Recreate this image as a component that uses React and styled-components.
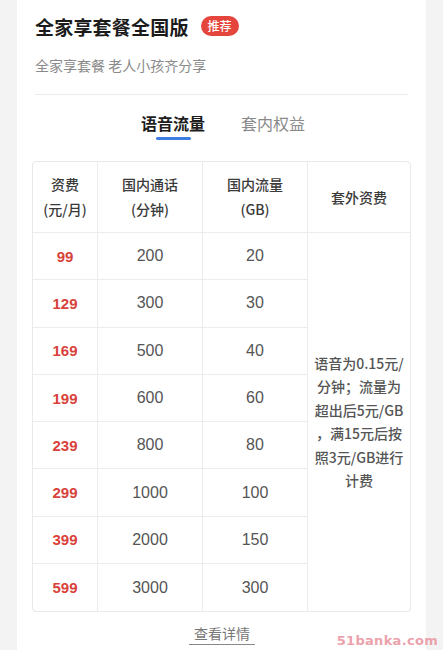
import styled, { createGlobalStyle } from 'styled-components';

const GlobalStyle = createGlobalStyle`
  html, body {
    margin: 0;
    padding: 0;
    background: #f3f3f3;
    font-family: "Noto Sans CJK SC", "Noto Sans", sans-serif;
  }
`;

const Page = styled.div`
  position: relative;
  width: 443px;
  height: 650px;
  overflow: hidden;
  background: #f3f3f3;
`;

const Card = styled.div`
  margin: 0 17px;
  height: 650px;
  background: #fff;
  padding: 0 15px 0 18px;
  box-sizing: border-box;
  display: flex;
  flex-direction: column;
`;

const TitleRow = styled.div`
  display: flex;
  align-items: center;
  gap: 12px;
  margin-top: 12px;
  height: 28px;
`;

const Title = styled.h1`
  margin: 0;
  font-size: 19px;
  font-weight: 700;
  color: #1b1b1b;
  letter-spacing: 0.2px;
`;

const Badge = styled.span`
  background: #e4463d;
  color: #fff;
  font-size: 12px;
  line-height: 20px;
  padding: 0 7px;
  border-radius: 10px;
  font-weight: 500;
`;

const Subtitle = styled.div`
  margin-top: 15px;
  font-size: 14px;
  color: #8a8a8a;
  line-height: 20px;
`;

const Divider = styled.div`
  height: 1px;
  background: #ececec;
  margin-top: 19px;
  margin-right: 3px;
`;

const Tabs = styled.div`
  display: flex;
  justify-content: center;
  gap: 36px;
  margin-top: 17px;
`;

const Tab = styled.div`
  position: relative;
  font-size: 16px;
  line-height: 22px;
  height: 28px;
  color: ${(p) => (p.$active ? '#1d1d1d' : '#8a8a8a')};
  font-weight: ${(p) => (p.$active ? 600 : 400)};

  &::after {
    content: '';
    display: ${(p) => (p.$active ? 'block' : 'none')};
    position: absolute;
    left: 50%;
    bottom: 0;
    width: 35px;
    height: 3px;
    margin-left: -17px;
    border-radius: 2px;
    background: #3b7de3;
  }
`;

const Table = styled.div`
  margin: 21px 0 0 -3px;
  width: 379px;
  display: grid;
  grid-template-columns: 65px 105px 105px 1fr;
  grid-template-rows: 71px repeat(8, 47.3px);
  border: 1px solid #e9e9e9;
  border-radius: 4px;
  box-sizing: border-box;
  overflow: hidden;
`;

const Cell = styled.div`
  display: flex;
  align-items: center;
  justify-content: center;
  text-align: center;
  border-right: ${(p) => (p.$last ? 'none' : '1px solid #ececec')};
  border-bottom: ${(p) => (p.$bottom ? 'none' : '1px solid #ececec')};
  font-size: 15px;
  color: #555;
`;

const HeadCell = styled(Cell)`
  font-size: 14px;
  line-height: 25px;
  color: #3a3a3a;
  font-weight: 500;
`;

const Price = styled(Cell)`
  color: #d8423b;
  font-weight: 700;
  font-family: "Liberation Sans", "Noto Sans", sans-serif;
  font-size: 15px;
`;

const Num = styled(Cell)`
  font-family: "Liberation Sans", "Noto Sans", sans-serif;
  font-size: 16px;
  color: #555;
`;

const Extra = styled(Cell)`
  grid-column: 4;
  grid-row: 2 / span 8;
  font-size: 14px;
  line-height: 23.5px;
  font-weight: 500;
  color: #555;
  padding: 0 4px;
`;

const More = styled.div`
  align-self: center;
  margin-top: 11px;
  margin-left: -2px;
  font-size: 14px;
  color: #777;
  line-height: 20px;
  border-bottom: 1px solid #888;
  padding: 0 5px 1px;
`;

const Watermark = styled.div`
  position: absolute;
  right: 5px;
  bottom: 2px;
  font-family: "DejaVu Sans", sans-serif;
  font-weight: 700;
  font-size: 13px;
  color: #eba2ac;
  letter-spacing: 0.3px;
`;

const rows = [
  ['99', '200', '20'],
  ['129', '300', '30'],
  ['169', '500', '40'],
  ['199', '600', '60'],
  ['239', '800', '80'],
  ['299', '1000', '100'],
  ['399', '2000', '150'],
  ['599', '3000', '300'],
];

export default function App() {
  return (
    <Page>
      <GlobalStyle />
      <Card>
        <TitleRow>
          <Title>全家享套餐全国版</Title>
          <Badge>推荐</Badge>
        </TitleRow>
        <Subtitle>全家享套餐 老人小孩齐分享</Subtitle>
        <Divider />
        <Tabs>
          <Tab $active>语音流量</Tab>
          <Tab>套内权益</Tab>
        </Tabs>
        <Table>
          <HeadCell>资费<br />(元/月)</HeadCell>
          <HeadCell>国内通话<br />(分钟)</HeadCell>
          <HeadCell>国内流量<br />(GB)</HeadCell>
          <HeadCell $last>套外资费</HeadCell>
          {rows.map(([price, call, data], i) => {
            const bottom = i === rows.length - 1;
            return [
              <Price key={`p${i}`} $bottom={bottom}>{price}</Price>,
              <Num key={`c${i}`} $bottom={bottom}>{call}</Num>,
              <Num key={`d${i}`} $bottom={bottom}>{data}</Num>,
            ];
          })}
          <Extra $last $bottom>
            <div>
              语音为0.15元/<br />分钟；流量为<br />超出后5元/GB<br />，满15元后按<br />照3元/GB进行<br />计费
            </div>
          </Extra>
        </Table>
        <More>查看详情</More>
      </Card>
      <Watermark>51banka.com</Watermark>
    </Page>
  );
}
